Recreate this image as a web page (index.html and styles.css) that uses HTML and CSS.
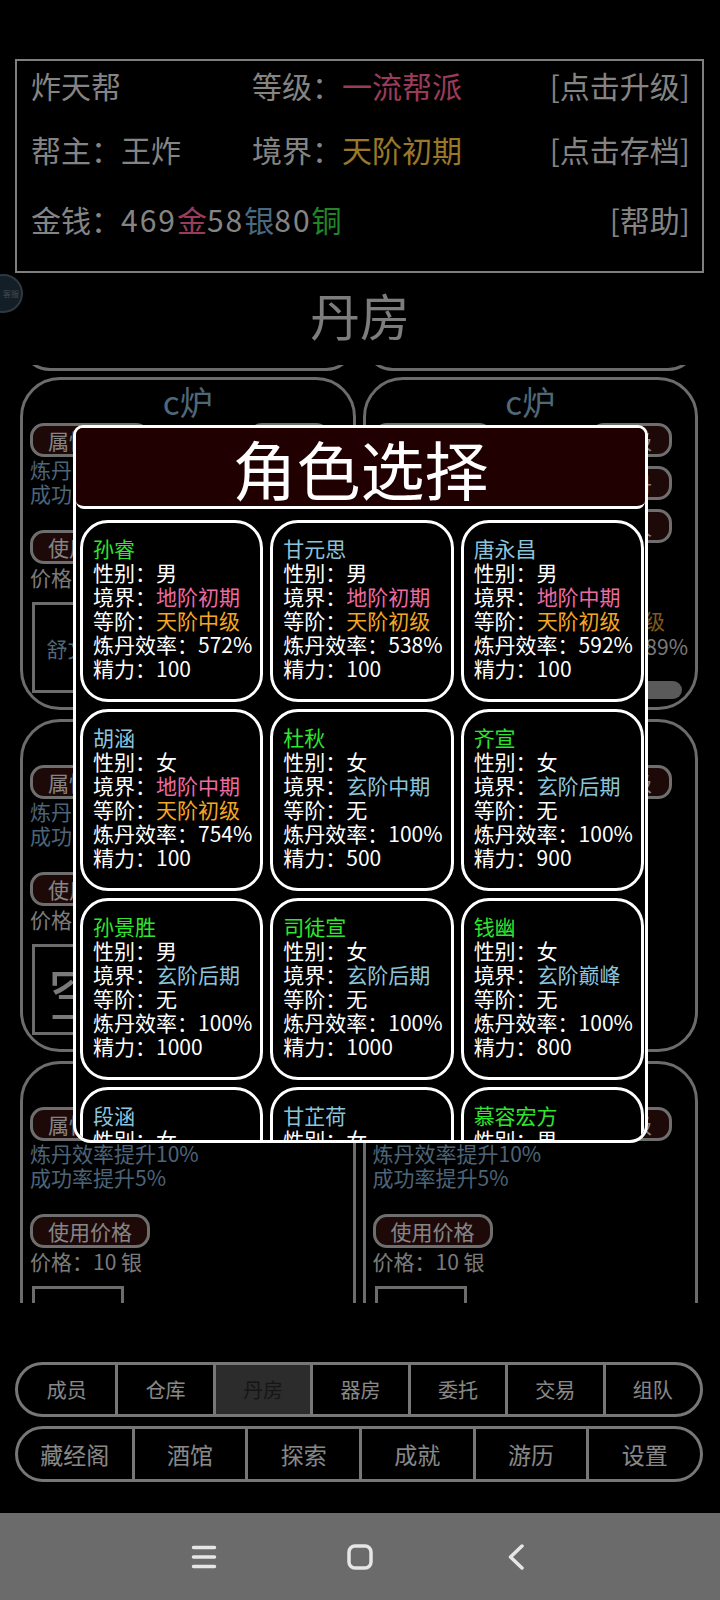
FILE: index.html
```html
<!DOCTYPE html>
<html lang="zh-CN">
<head>
  <meta charset="UTF-8" />
  <meta name="viewport" content="width=device-width, initial-scale=1.0"/>
  <title>丹房</title>
  <link rel="stylesheet" href="styles.css">
</head>
<body>

<div class="app">
  <div class="guild">
    <div class="guild-row">
      <span class="col-a">炸天帮</span>
      <span class="col-b">等级：<span class="pink">一流帮派</span></span>
      <span class="col-c">[点击升级]</span>
    </div>
    <div class="guild-row">
      <span class="col-a">帮主：王炸</span>
      <span class="col-b">境界：<span class="gold">天阶初期</span></span>
      <span class="col-c">[点击存档]</span>
    </div>
    <div class="guild-row money">
      <span>金钱：<span class="num">469</span><span class="pink">金</span><span class="num">58</span><span class="blue">银</span><span class="num">80</span><span class="green">铜</span></span>
      <span class="col-c">[帮助]</span>
    </div>
  </div>

  <div class="float-btn">客服</div>

  <h2 class="room-title">丹房</h2>

  <div class="furnaces">
    <div class="tails">
      <div class="tail"><div></div></div>
      <div class="tail"><div></div></div>
    </div>
    <div class="furnace-grid">
      <div class="furnace">
        <div class="furnace-name">c炉</div>
        <div class="furnace-top">
          <div class="furnace-left">
            <span class="chip">属性加成</span>
            <p class="effect">炼丹效率提升10%<br>成功率提升5%</p>
            <span class="chip">使用价格</span>
            <p class="price">价格：10 银</p>
          </div>
          <div class="furnace-actions">
            <span class="chip">升级</span>
            <span class="chip">取丹</span>
            <span class="chip">换人</span>
          </div>
        </div>
        <div class="furnace-bottom">
          <div class="slot">舒文昊</div>
          <div class="slot-info">
            <div class="level">天阶初级</div>
            <div>成功率：89%</div>
            <div class="bar"></div>
          </div>
        </div>
      </div>

      <div class="furnace">
        <div class="furnace-name">c炉</div>
        <div class="furnace-top">
          <div class="furnace-left">
            <span class="chip">属性加成</span>
            <p class="effect">炼丹效率提升10%<br>成功率提升5%</p>
            <span class="chip">使用价格</span>
            <p class="price">价格：10 银</p>
          </div>
          <div class="furnace-actions">
            <span class="chip">升级</span>
            <span class="chip">取丹</span>
            <span class="chip">换人</span>
          </div>
        </div>
        <div class="furnace-bottom">
          <div class="slot">柳如烟</div>
          <div class="slot-info">
            <div class="level">天阶初级</div>
            <div>成功率：89%</div>
            <div class="bar"></div>
          </div>
        </div>
      </div>

      <div class="furnace">
        <div class="furnace-name">c炉</div>
        <div class="furnace-top">
          <div class="furnace-left">
            <span class="chip">属性加成</span>
            <p class="effect">炼丹效率提升10%<br>成功率提升5%</p>
            <span class="chip">使用价格</span>
            <p class="price">价格：10 银</p>
          </div>
          <div class="furnace-actions">
            <span class="chip">升级</span>
          </div>
        </div>
        <div class="furnace-bottom">
          <div class="slot empty">空</div>
        </div>
      </div>

      <div class="furnace">
        <div class="furnace-name">c炉</div>
        <div class="furnace-top">
          <div class="furnace-left">
            <span class="chip">属性加成</span>
            <p class="effect">炼丹效率提升10%<br>成功率提升5%</p>
            <span class="chip">使用价格</span>
            <p class="price">价格：10 银</p>
          </div>
          <div class="furnace-actions">
            <span class="chip">升级</span>
          </div>
        </div>
        <div class="furnace-bottom">
          <div class="slot empty">空</div>
        </div>
      </div>

      <div class="furnace">
        <div class="furnace-name">c炉</div>
        <div class="furnace-top">
          <div class="furnace-left">
            <span class="chip">属性加成</span>
            <p class="effect">炼丹效率提升10%<br>成功率提升5%</p>
            <span class="chip">使用价格</span>
            <p class="price">价格：10 银</p>
          </div>
          <div class="furnace-actions">
            <span class="chip">升级</span>
          </div>
        </div>
        <div class="furnace-bottom">
          <div class="slot empty">空</div>
        </div>
      </div>

      <div class="furnace">
        <div class="furnace-name">c炉</div>
        <div class="furnace-top">
          <div class="furnace-left">
            <span class="chip">属性加成</span>
            <p class="effect">炼丹效率提升10%<br>成功率提升5%</p>
            <span class="chip">使用价格</span>
            <p class="price">价格：10 银</p>
          </div>
          <div class="furnace-actions">
            <span class="chip">升级</span>
          </div>
        </div>
        <div class="furnace-bottom">
          <div class="slot empty">空</div>
        </div>
      </div>
    </div>
  </div>

  <div class="tabs tabs-7">
    <div class="tab">成员</div>
    <div class="tab">仓库</div>
    <div class="tab active">丹房</div>
    <div class="tab">器房</div>
    <div class="tab">委托</div>
    <div class="tab">交易</div>
    <div class="tab">组队</div>
  </div>
  <div class="tabs tabs-6">
    <div class="tab">藏经阁</div>
    <div class="tab">酒馆</div>
    <div class="tab">探索</div>
    <div class="tab">成就</div>
    <div class="tab">游历</div>
    <div class="tab">设置</div>
  </div>

  <div class="mask"></div>

  <div class="modal">
    <div class="modal-head">角色选择</div>
    <div class="roster">
      <div class="hero">
        <div class="green">孙睿</div>
        <div>性别：男</div>
        <div>境界：<span class="pink">地阶初期</span></div>
        <div>等阶：<span class="gold">天阶中级</span></div>
        <div>炼丹效率：572%</div>
        <div>精力：100</div>
      </div>
      <div class="hero">
        <div class="blue">甘元思</div>
        <div>性别：男</div>
        <div>境界：<span class="pink">地阶初期</span></div>
        <div>等阶：<span class="gold">天阶初级</span></div>
        <div>炼丹效率：538%</div>
        <div>精力：100</div>
      </div>
      <div class="hero">
        <div class="blue">唐永昌</div>
        <div>性别：男</div>
        <div>境界：<span class="pink">地阶中期</span></div>
        <div>等阶：<span class="gold">天阶初级</span></div>
        <div>炼丹效率：592%</div>
        <div>精力：100</div>
      </div>
      <div class="hero">
        <div class="blue">胡涵</div>
        <div>性别：女</div>
        <div>境界：<span class="pink">地阶中期</span></div>
        <div>等阶：<span class="gold">天阶初级</span></div>
        <div>炼丹效率：754%</div>
        <div>精力：100</div>
      </div>
      <div class="hero">
        <div class="green">杜秋</div>
        <div>性别：女</div>
        <div>境界：<span class="blue">玄阶中期</span></div>
        <div>等阶：无</div>
        <div>炼丹效率：100%</div>
        <div>精力：500</div>
      </div>
      <div class="hero">
        <div class="green">齐宣</div>
        <div>性别：女</div>
        <div>境界：<span class="blue">玄阶后期</span></div>
        <div>等阶：无</div>
        <div>炼丹效率：100%</div>
        <div>精力：900</div>
      </div>
      <div class="hero">
        <div class="green">孙景胜</div>
        <div>性别：男</div>
        <div>境界：<span class="blue">玄阶后期</span></div>
        <div>等阶：无</div>
        <div>炼丹效率：100%</div>
        <div>精力：1000</div>
      </div>
      <div class="hero">
        <div class="green">司徒宣</div>
        <div>性别：女</div>
        <div>境界：<span class="blue">玄阶后期</span></div>
        <div>等阶：无</div>
        <div>炼丹效率：100%</div>
        <div>精力：1000</div>
      </div>
      <div class="hero">
        <div class="green">钱幽</div>
        <div>性别：女</div>
        <div>境界：<span class="blue">玄阶巅峰</span></div>
        <div>等阶：无</div>
        <div>炼丹效率：100%</div>
        <div>精力：800</div>
      </div>
      <div class="hero">
        <div class="blue">段涵</div>
        <div>性别：女</div>
        <div>境界：<span class="blue">玄阶中期</span></div>
        <div>等阶：无</div>
        <div>炼丹效率：100%</div>
        <div>精力：600</div>
      </div>
      <div class="hero">
        <div class="blue">甘芷荷</div>
        <div>性别：女</div>
        <div>境界：<span class="blue">玄阶初期</span></div>
        <div>等阶：无</div>
        <div>炼丹效率：100%</div>
        <div>精力：500</div>
      </div>
      <div class="hero">
        <div class="green">慕容宏方</div>
        <div>性别：男</div>
        <div>境界：<span class="blue">玄阶后期</span></div>
        <div>等阶：无</div>
        <div>炼丹效率：100%</div>
        <div>精力：700</div>
      </div>
    </div>
  </div>
</div>

<div class="sysbar">
  <div class="sys-key">
    <svg width="26" height="24" viewBox="0 0 26 24"><path d="M2.5 2.5H23.5M2.5 12H23.5M2.5 21.5H23.5" fill="none" stroke="#e6e6e6" stroke-width="3.5" stroke-linecap="round"/></svg>
  </div>
  <div class="sys-key">
    <svg width="26" height="26" viewBox="0 0 26 26"><rect x="2" y="2" width="22" height="22" rx="6" fill="none" stroke="#e6e6e6" stroke-width="3.5"/></svg>
  </div>
  <div class="sys-key">
    <svg width="18" height="26" viewBox="0 0 18 26"><path d="M15 2L3.5 13L15 24" fill="none" stroke="#e6e6e6" stroke-width="3.5" stroke-linecap="round" stroke-linejoin="round"/></svg>
  </div>
</div>

</body>
</html>
```

FILE: styles.css
```css
* {
  box-sizing: border-box;
}

body {
  margin: 0;
  background: #000;
  color: #dcdcdc;
  font-family: "Noto Sans CJK SC", "Noto Sans", sans-serif;
}

.app {
  position: relative;
  height: 1513px;
  padding-top: 59px;
  overflow: hidden;
}

.pink { color: #ff6599; }
.gold { color: #ffc843; }
.blue { color: #7cb0d5; }
.green { color: #38e046; }

/* guild info box */
.guild {
  margin: 0 16px 0 15px;
  border: 2px solid #d4d4d4;
  padding: 0 12px 28px 14px;
  font-size: 30px;
  white-space: nowrap;
}

.guild-row {
  display: flex;
  align-items: center;
  height: 48px;
}

.guild-row + .guild-row {
  margin-top: 16px;
}

.guild-row.money {
  margin-top: 22px;
  justify-content: space-between;
}

.col-a {
  width: 221px;
}

.col-b {
  flex: 1;
}

.num {
  letter-spacing: 2px;
}

.float-btn {
  position: absolute;
  left: -16px;
  top: 274px;
  width: 39px;
  height: 39px;
  border-radius: 50%;
  background: #223240;
  border: 2px solid #4a6070;
  font-size: 8px;
  color: #6a7d8a;
  display: flex;
  align-items: center;
  justify-content: flex-end;
  padding-right: 2px;
}

.room-title {
  margin: 11px 0 21px;
  font-size: 50px;
  line-height: 60px;
  font-weight: normal;
  text-align: center;
  color: #d0d0d0;
}

/* furnace list */
.furnaces {
  margin: 0 22px 0 20px;
  height: 938px;
  overflow: hidden;
}

.tails {
  display: grid;
  grid-template-columns: 1fr 1fr;
  column-gap: 7px;
  margin-bottom: 6px;
}

.tail {
  height: 6px;
  overflow: hidden;
}

.tail div {
  height: 60px;
  margin-top: -54px;
  border: 3px solid #b4b4b4;
  border-radius: 40px;
}

.furnace-grid {
  display: grid;
  grid-template-columns: 1fr 1fr;
  gap: 9px 7px;
}

.furnace {
  height: 333px;
  border: 3px solid #b4b4b4;
  border-radius: 40px;
  padding: 3px 7px 0;
  overflow: hidden;
}

.furnace-name {
  text-align: center;
  font-size: 33px;
  line-height: 36px;
  color: #82aec8;
}

.furnace-top {
  display: flex;
  justify-content: space-between;
  margin-top: 4px;
}

.furnace-left {
  display: flex;
  flex-direction: column;
  align-items: flex-start;
}

.chip {
  display: inline-block;
  height: 34px;
  line-height: 28px;
  padding: 0 15px;
  border: 3px solid #b8b8b8;
  border-radius: 14px;
  background: #321010;
  font-size: 21px;
  color: #dedede;
  white-space: nowrap;
}

.effect {
  margin: 0 0 25px;
  font-size: 21px;
  line-height: 24px;
  color: #7fa7c8;
  white-space: nowrap;
}

.price {
  margin: 2px 0 0;
  font-size: 21px;
  line-height: 22px;
  color: #cccccc;
}

.furnace-actions {
  display: flex;
  flex-direction: column;
  gap: 9px;
  margin-right: 16px;
}

.furnace-actions .chip {
  padding: 0 17px;
}

.furnace-bottom {
  display: flex;
  align-items: flex-start;
  margin-top: 14px;
}

.slot {
  width: 92px;
  height: 91px;
  margin-left: 2px;
  border: 3px solid #b4b4b4;
  display: flex;
  align-items: center;
  justify-content: center;
  font-size: 21px;
  color: #82aec8;
}

.slot.empty {
  font-size: 60px;
  color: #cccccc;
}

.slot-info {
  flex: 1;
  padding-top: 5px;
  text-align: right;
  font-size: 21px;
  line-height: 26px;
  color: #cccccc;
}

.level {
  margin-right: 23px;
  color: #cc9635;
}

.bar {
  height: 18px;
  margin: 22px 6px 0 12px;
  border-radius: 9px;
  background: #969696;
}

/* bottom tabs */
.tabs {
  display: grid;
  margin: 0 17px 0 15px;
  border: 3px solid #c6c6c6;
  border-radius: 30px;
  overflow: hidden;
}

.tabs-7 {
  grid-template-columns: repeat(7, 1fr);
  height: 55px;
  margin-top: 59px;
  font-size: 20px;
}

.tabs-6 {
  grid-template-columns: repeat(6, 1fr);
  height: 56px;
  margin-top: 9px;
  font-size: 23px;
}

.tab {
  display: flex;
  align-items: center;
  justify-content: center;
  color: #e3e3e3;
}

.tab + .tab {
  border-left: 3px solid #c6c6c6;
}

.tab.active {
  background: #4a4a4a;
  color: #262626;
}

.mask {
  position: absolute;
  inset: 0;
  background: rgba(0, 0, 0, 0.4);
}

/* role picker dialog */
.modal {
  position: absolute;
  left: 73px;
  top: 425px;
  width: 575px;
  height: 718px;
  border: 3px solid #fff;
  border-radius: 10px 10px 18px 18px;
  background: #000;
  overflow: hidden;
}

.modal-head {
  height: 81px;
  border-bottom: 3px solid #fff;
  border-radius: 0 0 8px 8px;
  background: #200000;
  text-align: center;
  font-size: 64px;
  line-height: 78px;
  color: #fff;
}

.roster {
  display: grid;
  grid-template-columns: repeat(3, 1fr);
  gap: 7px;
  padding: 11px 4px 0;
}

.hero {
  height: 182px;
  border: 3px solid #fff;
  border-radius: 28px;
  padding: 13px 8px 0 10px;
  font-size: 21px;
  line-height: 24px;
  color: #fff;
  white-space: nowrap;
}

.hero .green { color: #2ee62e; }
.hero .blue { color: #8cc4dc; }
.hero .pink { color: #ee6aa0; }
.hero .gold { color: #f5a623; }

/* android nav */
.sysbar {
  height: 87px;
  background: #6b6b6b;
  display: flex;
  justify-content: center;
  align-items: center;
}

.sys-key {
  width: 156px;
  display: flex;
  justify-content: center;
}
```
